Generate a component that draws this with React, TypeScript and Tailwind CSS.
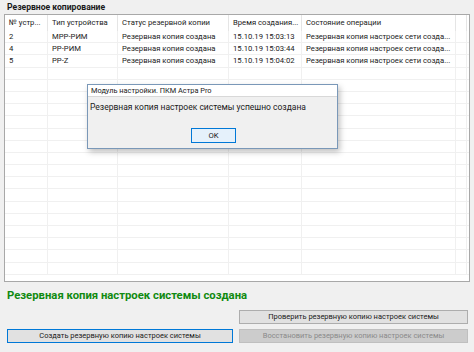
import React from "react";

const cols = [43, 70, 111, 73, 154, 11];
const headers = ["№ устр...", "Тип устройства", "Статус резервной копии", "Время создания...", "Состояние операции", ""];
const rows = [
  ["2", "MPP-РИМ", "Резервная копия создана", "15.10.19 15:03:13", "Резервная копия настроек сети созда..."],
  ["4", "PP-РИМ", "Резервная копия создана", "15.10.19 15:03:44", "Резервная копия настроек сети созда..."],
  ["5", "PP-Z", "Резервная копия создана", "15.10.19 15:04:02", "Резервная копия настроек сети созда..."],
];

function Row({ cells, header }: { cells: string[]; header?: boolean }) {
  return (
    <div className={header ? "flex h-[16px] shrink-0" : "flex h-[12.2px] shrink-0 border-b border-[#f0f0f0]"}>
      {cols.map((w, i) => (
        <div
          key={i}
          className={
            header
              ? "h-full shrink-0 border-r border-[#e5e5e5] pl-[4px] text-[7.7px] leading-[16px] whitespace-nowrap overflow-hidden"
              : "h-full shrink-0 border-r border-[#f0f0f0] pl-[4px] text-[7.7px] leading-[12px] whitespace-nowrap overflow-hidden"
          }
          style={{ width: w }}
        >
          {cells[i] ?? ""}
        </div>
      ))}
      <div className="flex-1" />
    </div>
  );
}

export default function App() {
  const empty = Array.from({ length: 17 }, () => [] as string[]);
  return (
    <div
      className="relative flex flex-col w-[474px] h-[352px] overflow-hidden bg-[#f0f0f0] text-[#1a1a1a]"
      style={{ fontFamily: 'Roboto, "Noto Sans", sans-serif' }}
    >
      <div className="h-[14px] shrink-0 pl-[7px] text-[8.6px] font-bold leading-[14px]">Резервное копирование</div>
      <div className="mx-[4px] h-[268px] shrink-0 border border-[#a8a8a8] bg-white overflow-hidden flex flex-col">
        <Row cells={headers} header />
        {rows.map((r, i) => (
          <Row key={"r" + i} cells={r} />
        ))}
        {empty.map((r, i) => (
          <Row key={"e" + i} cells={r} />
        ))}
      </div>
      <div className="shrink-0 pl-[7px] pt-[7px] h-[28px] text-[11.3px] font-bold text-[#108a10] leading-[14px]">
        Резервная копия настроек системы создана
      </div>
      <div className="shrink-0 flex justify-end pr-[6px]">
        <button className="w-[229px] h-[14px] border border-[#adadad] bg-[#e1e1e1] text-[7.5px] leading-[12px] text-[#1a1a1a]">
          Проверить резервную копию настроек системы
        </button>
      </div>
      <div className="shrink-0 flex gap-[6px] pl-[7px] pr-[6px] pt-[5px]">
        <button className="w-[226px] h-[14px] border border-[#0078d7] bg-[#e1e1e1] text-[7.5px] leading-[12px] text-[#1a1a1a]">
          Создать резервную копию настроек системы
        </button>
        <button className="w-[229px] h-[14px] border border-[#bfbfbf] bg-[#cccccc] text-[7.5px] leading-[12px] text-[#8a8a8a]">
          Восстановить резервную копию настроек системы
        </button>
      </div>

      <div className="absolute left-[87px] top-[84px] w-[251px] h-[65px] border border-[#7a98b8] bg-[#f0f0f0] shadow-[2px_3px_6px_rgba(0,0,0,0.25)] flex flex-col">
        <div className="h-[12px] shrink-0 bg-white border-b border-[#d8d8d8] pl-[3px] text-[7.4px] leading-[12px] whitespace-nowrap">
          Модуль настройки. ПКМ Астра Pro
        </div>
        <div className="pl-[2px] pt-[3px] text-[8.5px] leading-[14px] whitespace-nowrap">
          Резервная копия настроек системы успешно создана
        </div>
        <div className="flex justify-center pt-[14px] pl-[2px]">
          <button className="w-[45px] h-[15px] border border-[#0078d7] bg-[#e5f1fb] text-[7.7px] leading-[13px]">
            OK
          </button>
        </div>
      </div>
    </div>
  );
}
